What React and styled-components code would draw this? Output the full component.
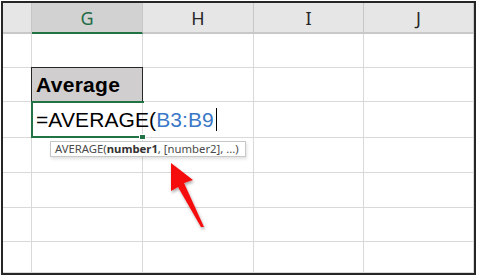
import React from "react";
import styled, { createGlobalStyle } from "styled-components";

const GlobalStyle = createGlobalStyle`
  html, body { margin: 0; padding: 0; background: #ffffff; }
  #root { width: 478px; height: 277px; }
`;

const GRID = "#d9d9d9";
const GREEN = "#217346";

const Frame = styled.div`
  position: relative;
  margin: 1px;
  width: 475px;
  height: 274px;
  box-sizing: border-box;
  border: 2px solid #262626;
  overflow: hidden;
  background: #fff;
`;

const Sheet = styled.div`
  display: grid;
  grid-template-columns: 29px 111px 111px 110px 110px;
  grid-template-rows: 31px 34px 34px 36px 35px 35px 34px 31px;
`;

const HeaderCell = styled.div`
  box-sizing: border-box;
  display: flex;
  align-items: center;
  justify-content: center;
  padding-top: 1px;
  background: ${(p) => (p.$selected ? "#d2d2d2" : "#e6e6e6")};
  border-right: 1px solid #c6c6c6;
  border-bottom: ${(p) => (p.$selected ? `2px solid ${GREEN}` : "2px solid #c8c8c8")};
  color: ${(p) => (p.$selected ? "#1e6b45" : "#262626")};
  font-family: "Noto Sans", "Open Sans", sans-serif;
  font-size: 18px;
`;

const Cell = styled.div`
  position: relative;
  box-sizing: border-box;
  border-right: 1px solid ${GRID};
  border-bottom: 1px solid ${GRID};
  display: flex;
  align-items: flex-end;
  padding: 0 0 4px 4px;
  font-family: "Liberation Sans", Arial, sans-serif;
  font-size: 21px;
  letter-spacing: 0.1px;
  color: #000;
  white-space: nowrap;
`;

const LabelCell = styled(Cell)`
  background: #d0cece;
  font-weight: bold;
  letter-spacing: 0.3px;
  z-index: 2;
  &::after {
    content: "";
    position: absolute;
    top: -1px;
    left: -1px;
    right: -1px;
    bottom: -1px;
    border: 1px solid #262626;
    pointer-events: none;
  }
`;

const EditCell = styled(Cell)`
  z-index: 3;
  padding-bottom: 5px;
  &::after {
    content: "";
    position: absolute;
    top: -1px;
    left: -1px;
    right: -2px;
    bottom: -1px;
    border: 2px solid ${GREEN};
    border-right: none;
    pointer-events: none;
  }
`;

const FillHandle = styled.span`
  position: absolute;
  right: -4px;
  bottom: -3px;
  width: 5px;
  height: 4px;
  background: ${GREEN};
  border: 1px solid #fff;
  z-index: 2;
`;

const EditText = styled.span`
  position: relative;
  z-index: 4;
`;

const Ref = styled.span`
  color: #3b78c8;
`;

const Caret = styled.span`
  display: inline-block;
  width: 1px;
  height: 23px;
  margin-left: 2px;
  background: #000;
  vertical-align: -4px;
`;

const Tooltip = styled.div`
  position: absolute;
  left: 47px;
  top: 138px;
  width: 196px;
  height: 16px;
  box-sizing: border-box;
  padding-left: 4px;
  background: #fff;
  border: 1px solid #c8c8c8;
  box-shadow: 1px 2px 3px rgba(0, 0, 0, 0.12);
  font-family: "Noto Sans", "Open Sans", sans-serif;
  font-size: 11.3px;
  line-height: 14px;
  color: #4a4a4a;
  white-space: nowrap;
  z-index: 5;
  b { color: #333; }
`;

const Arrow = styled.svg`
  position: absolute;
  left: 157px;
  top: 152px;
  z-index: 6;
  overflow: visible;
`;

const cols = ["", "G", "H", "I", "J"];

export default function App() {
  const rows = 7;
  const cells = [];
  cols.forEach((c, i) =>
    cells.push(
      <HeaderCell key={"h" + i} $selected={c === "G"}>
        {c}
      </HeaderCell>
    )
  );
  for (let r = 1; r <= rows; r++) {
    for (let c = 0; c < cols.length; c++) {
      const key = `${r}-${c}`;
      if (r === 2 && c === 1) {
        cells.push(<LabelCell key={key}>Average</LabelCell>);
      } else if (r === 3 && c === 1) {
        cells.push(
          <EditCell key={key}>
            <EditText>
              =AVERAGE(<Ref>B3:B9</Ref>
              <Caret />
            </EditText>
            <FillHandle />
          </EditCell>
        );
      } else {
        cells.push(<Cell key={key} />);
      }
    }
  }
  return (
    <>
      <GlobalStyle />
      <Frame>
        <Sheet>{cells}</Sheet>
        <Tooltip>
          AVERAGE(<b>number1</b>, [number2], ...)
        </Tooltip>
        <Arrow width="50" height="76" viewBox="0 0 50 76">
          <defs>
            <filter id="sh" x="-50%" y="-50%" width="200%" height="200%">
              <feDropShadow dx="1" dy="2" stdDeviation="1.6" floodColor="#000" floodOpacity="0.35" />
            </filter>
          </defs>
          <polygon
            points="11,8 33,25 24,28 44,72 41,72 18,32 11,36"
            fill="#f50a0a"
            filter="url(#sh)"
          />
        </Arrow>
      </Frame>
    </>
  );
}
